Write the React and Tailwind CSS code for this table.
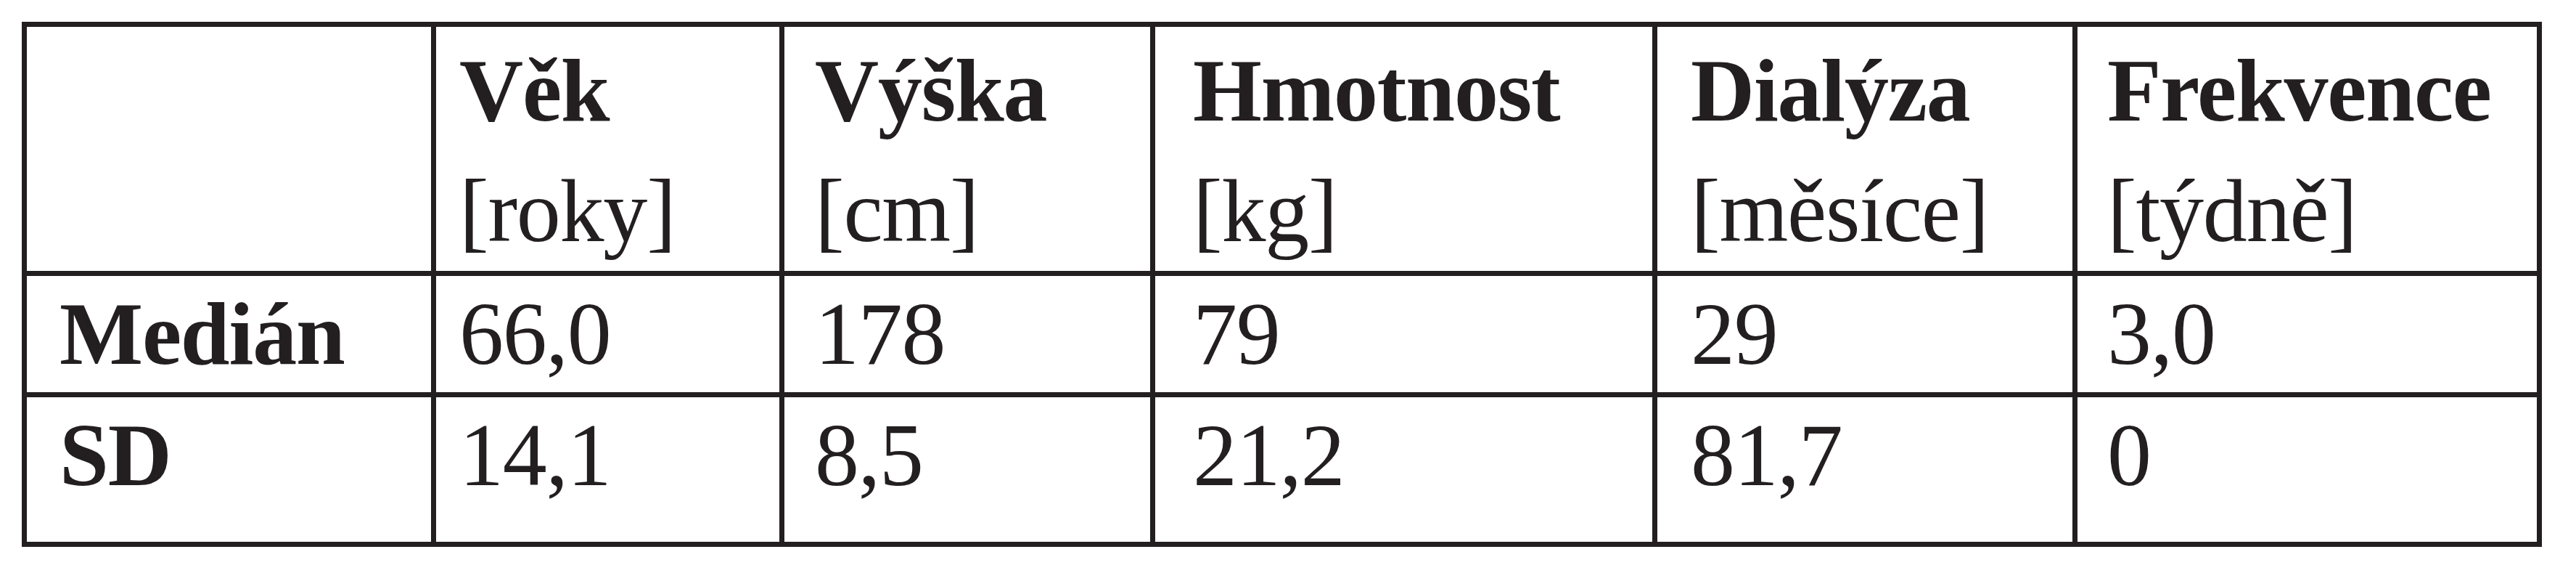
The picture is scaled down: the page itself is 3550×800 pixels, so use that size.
const COLUMNS = [
  { key: "label", pad: "pl-[45px]" },
  { key: "vek", title: "Věk", unit: "[roky]", pad: "pl-[32px]" },
  { key: "vyska", title: "Výška", unit: "[cm]", pad: "pl-[42px]" },
  { key: "hmotnost", title: "Hmotnost", unit: "[kg]", pad: "pl-[52px]" },
  { key: "dialyza", title: "Dialýza", unit: "[měsíce]", pad: "pl-[46px]" },
  { key: "frekvence", title: "Frekvence", unit: "[týdně]", pad: "pl-[41px]" },
];

const ROWS = [
  { label: "Medián", values: ["66,0", "178", "79", "29", "3,0"] },
  { label: "SD", values: ["14,1", "8,5", "21,2", "81,7", "0"] },
];

export default function App() {
  return (
    <div className="min-h-screen bg-white pl-[30px] pt-[30px] font-['Liberation_Serif',serif] text-[122px] text-[#231f20] tracking-[-0.01em]">
      <div className="inline-grid grid-cols-[557px_473px_504px_685px_572px_633px] grid-rows-[336px_160px_199px] gap-[7px] bg-[#231f20] p-[7px]">
        {COLUMNS.map((col) => (
          <div key={col.key} className={`bg-white pt-[5px] leading-[166px] ${col.pad}`}>
            {col.title && (
              <>
                <div className="font-bold">{col.title}</div>
                <div>{col.unit}</div>
              </>
            )}
          </div>
        ))}

        {ROWS.map((row) =>
          COLUMNS.map((col, i) => (
            <div key={row.label + col.key} className={`bg-white leading-[160px] ${col.pad}`}>
              {i === 0 ? <span className="font-bold">{row.label}</span> : row.values[i - 1]}
            </div>
          )),
        )}
      </div>
    </div>
  );
}
